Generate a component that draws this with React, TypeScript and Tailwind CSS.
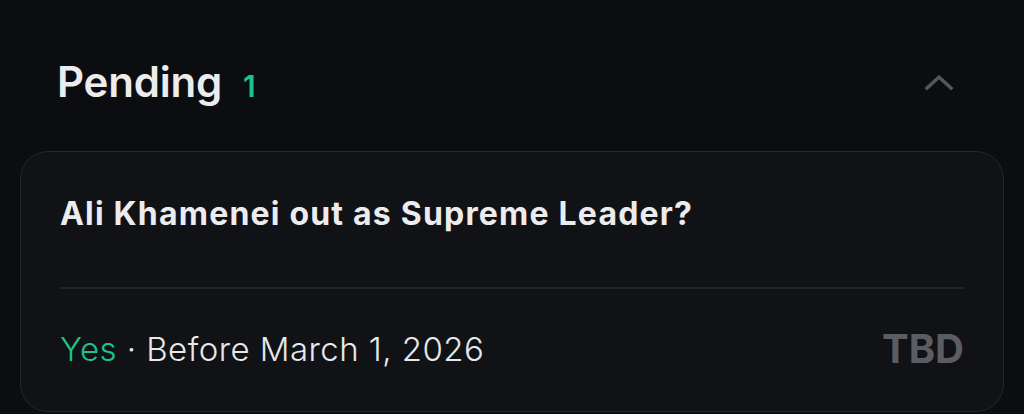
export default function App() {
  return (
    <div
      className="w-[1024px] h-[414px] overflow-hidden bg-[#0c0d10] flex flex-col"
      style={{ fontFamily: "Inter, 'Noto Sans', sans-serif" }}
    >
      <div className="flex items-center justify-between pl-[57px] pr-[70px] pt-[58px]">
        <div className="flex items-baseline gap-[21px]">
          <span className="text-[42px] leading-[48px] font-semibold text-[#ececee] tracking-[-0.2px]">Pending</span>
          <span className="text-[30px] leading-[36px] font-semibold text-[#1ec28b]">1</span>
        </div>
        <svg width="30" height="18" viewBox="0 0 30 18" fill="none">
          <path d="M3 15 L15 4 L27 15" stroke="#55565b" strokeWidth="3.5" strokeLinecap="square" />
        </svg>
      </div>
      <div className="mx-[20px] mt-[45px] rounded-[28px] border border-[#26272c] bg-[#111216] pt-[43px] pb-[42px] px-[38px]">
        <div className="px-[1px] text-[32px] leading-[38px] font-bold tracking-[1.2px] text-[#ececee]">
          Ali Khamenei out as Supreme Leader?
        </div>
        <div className="mt-[54px] h-[2px] bg-[#222328]" />
        <div className="mt-[40px] flex items-center justify-between px-[1px]">
          <div className="text-[33px] leading-[40px] font-light tracking-[0.45px] text-[#e8e8ea]">
            <span className="text-[#1ec28b]">Yes</span>
            <span> · Before March 1, 2026</span>
          </div>
          <div className="text-[40px] leading-[40px] font-bold text-[#5c5d62]">TBD</div>
        </div>
      </div>
    </div>
  );
}
